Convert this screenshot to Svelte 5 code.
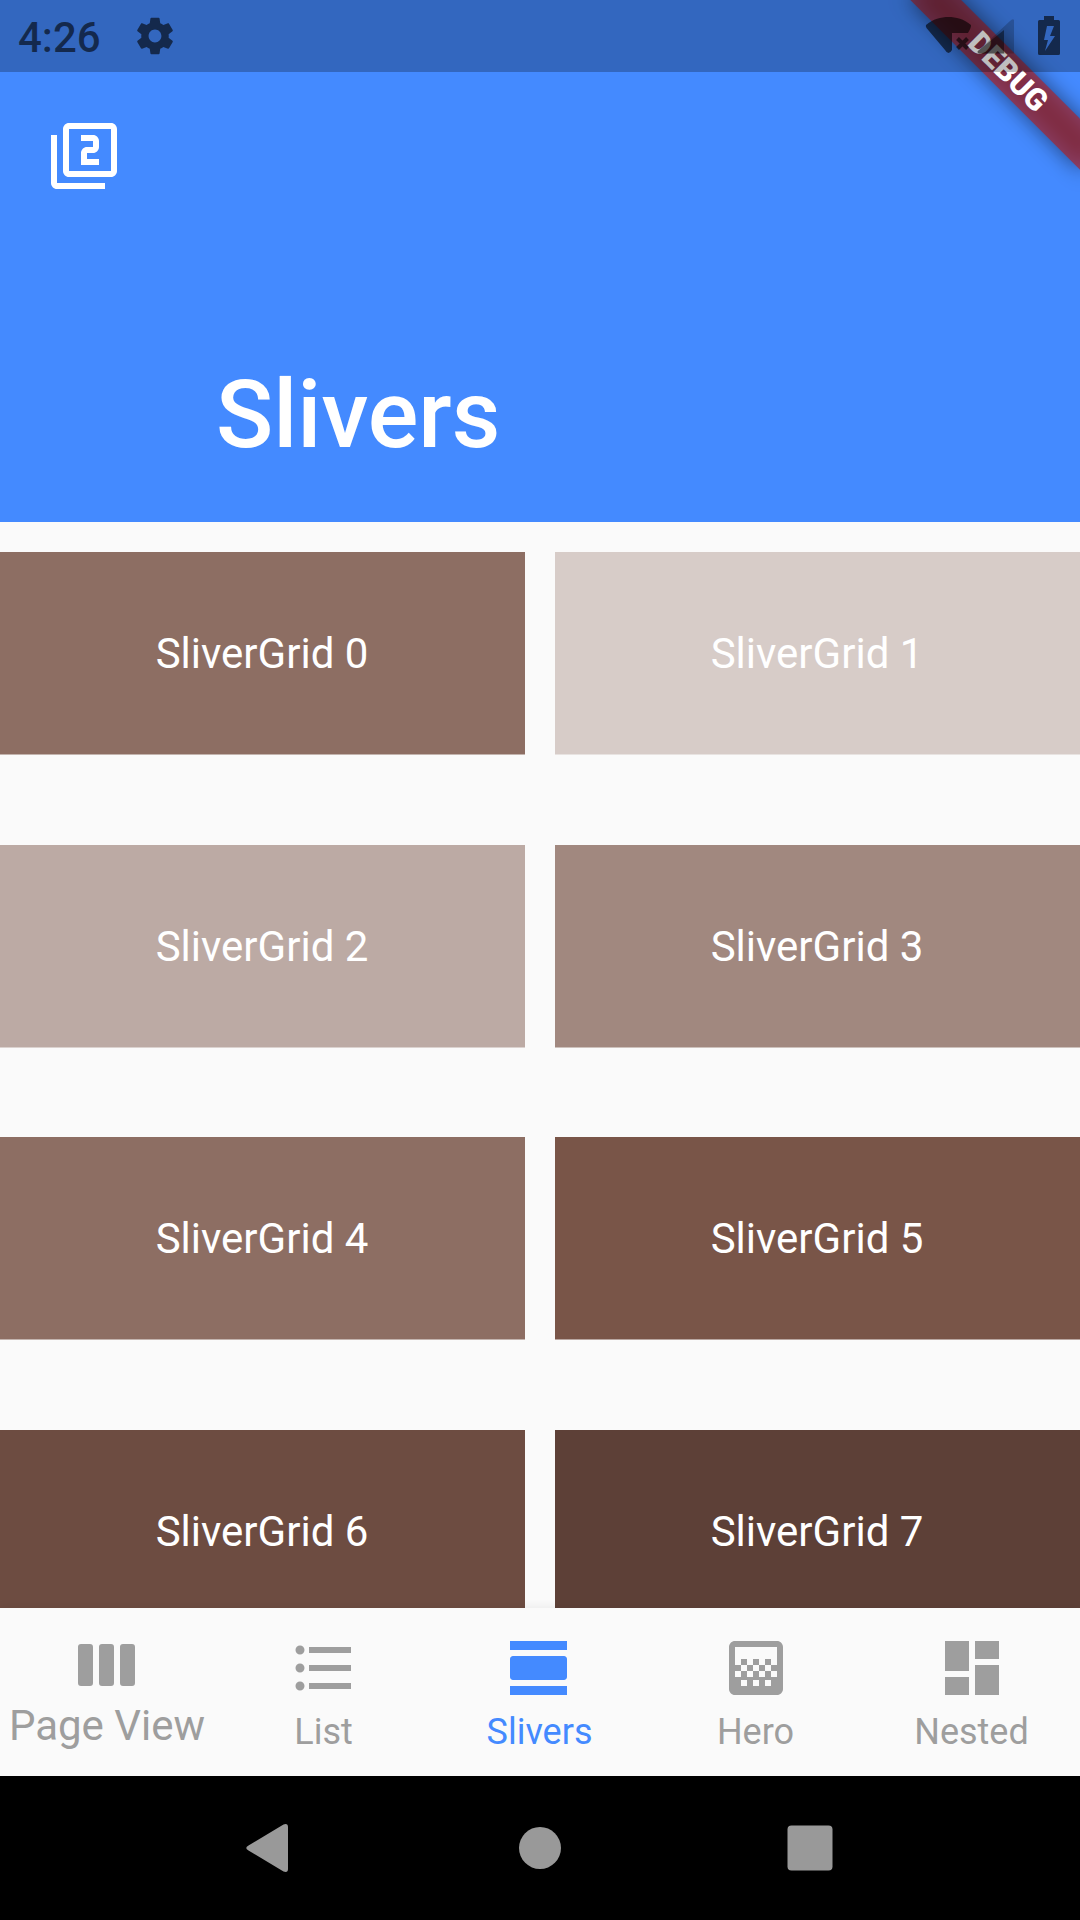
<script>
  const tiles = [
    { label: 'SliverGrid 0', shade: 'b400' },
    { label: 'SliverGrid 1', shade: 'b100' },
    { label: 'SliverGrid 2', shade: 'b200' },
    { label: 'SliverGrid 3', shade: 'b300' },
    { label: 'SliverGrid 4', shade: 'b400' },
    { label: 'SliverGrid 5', shade: 'b500' },
    { label: 'SliverGrid 6', shade: 'b600' },
    { label: 'SliverGrid 7', shade: 'b800' }
  ];

  const tabs = [
    {
      label: 'Page View',
      large: true,
      path: 'M3 4h3a1 1 0 0 1 1 1v12a1 1 0 0 1-1 1H3a1 1 0 0 1-1-1V5a1 1 0 0 1 1-1zM10 4h3a1 1 0 0 1 1 1v12a1 1 0 0 1-1 1h-3a1 1 0 0 1-1-1V5a1 1 0 0 1 1-1zM17 4h3a1 1 0 0 1 1 1v12a1 1 0 0 1-1 1h-3a1 1 0 0 1-1-1V5a1 1 0 0 1 1-1z'
    },
    {
      label: 'List',
      path: 'M4 10.5a1.5 1.5 0 1 0 0 3 1.5 1.5 0 0 0 0-3zm0-6a1.5 1.5 0 1 0 0 3 1.5 1.5 0 0 0 0-3zm0 12a1.5 1.5 0 1 0 0 3 1.5 1.5 0 0 0 0-3zM7 19h14v-2H7v2zm0-6h14v-2H7v2zm0-8v2h14V5H7z'
    },
    {
      label: 'Slivers',
      active: true,
      path: 'M2 21h19v-3H2v3zM20 8H3c-.55 0-1 .45-1 1v6c0 .55.45 1 1 1h17c.55 0 1-.45 1-1V9c0-.55-.45-1-1-1zM2 3v3h19V3H2z'
    },
    {
      label: 'Hero',
      path: 'M11 9h2v2h-2zm-2 2h2v2H9zm4 0h2v2h-2zm2-2h2v2h-2zM7 9h2v2H7zm12-6H5c-1.1 0-2 .9-2 2v14c0 1.1.9 2 2 2h14c1.1 0 2-.9 2-2V5c0-1.1-.9-2-2-2zM9 18H7v-2h2v2zm4 0h-2v-2h2v2zm4 0h-2v-2h2v2zm2-7h-2v2h2v2h-2v-2h-2v2h-2v-2h-2v2H9v-2H7v2H5v-2h2v-2H5V5h14v6z'
    },
    {
      label: 'Nested',
      path: 'M3 13h8V3H3v10zm0 8h8v-6H3v6zm10 0h8V11h-8v10zm0-18v6h8V3h-8z'
    }
  ];
</script>

<div class="screen">
  <div class="banner"><span>DEBUG</span></div>

  <div class="status">
    <span class="clock">4:26</span>
    <svg class="gear" width="44" height="44" viewBox="0 0 24 24">
      <path d="M19.43 12.98c.04-.32.07-.64.07-.98s-.03-.66-.07-.98l2.11-1.65c.19-.15.24-.42.12-.64l-2-3.46c-.12-.22-.39-.3-.61-.22l-2.49 1c-.52-.4-1.08-.73-1.69-.98l-.38-2.65C14.46 2.18 14.25 2 14 2h-4c-.25 0-.46.18-.49.42l-.38 2.65c-.61.25-1.17.59-1.69.98l-2.49-1c-.23-.09-.49 0-.61.22l-2 3.46c-.13.22-.07.49.12.64l2.11 1.65c-.04.32-.07.65-.07.98s.03.66.07.98l-2.11 1.65c-.19.15-.24.42-.12.64l2 3.46c.12.22.39.3.61.22l2.49-1c.52.4 1.08.73 1.69.98l.38 2.65c.03.24.24.42.49.42h4c.25 0 .46-.18.49-.42l.38-2.65c.61-.25 1.17-.59 1.69-.98l2.49 1c.23.09.49 0 .61-.22l2-3.46c.12-.22.07-.49-.12-.64l-2.11-1.65zM12 15.5c-1.93 0-3.5-1.57-3.5-3.5s1.57-3.5 3.5-3.5 3.5 1.57 3.5 3.5-1.57 3.5-3.5 3.5z" />
    </svg>
    <svg class="indicators" width="140" height="72" viewBox="0 0 140 72">
      <path d="M6 25C13 19 21 17 28.500 17S44 19 51 25Q51.500 27 48 33H32V50Q28.500 56 25 50L6.500 28Q5.500 26.500 6 25z" />
      <path d="M37.500 38.500l10 10M47.500 38.500l-10 10" class="cross" />
      <path class="faint" d="M94 20V53.500H59Q56 52 59 50L90 21Q93 18 94 20z" />
      <path class="level" d="M84 30V53.500H59Q56 52 59 50z" />
      <path fill-rule="evenodd" d="M124 16h10v4h4.500q1.500 0 1.500 1.500V53.500q0 1.500-1.500 1.500h-19q-1.500 0-1.500-1.500V21.500q0-1.500 1.500-1.500H124zM127 26l-3 14h4l-3 11 10-15h-5l4-10z" />
    </svg>
  </div>

  <header>
    <svg class="filter" width="72" height="72" viewBox="0 0 24 24">
      <path d="M3 5H1v16c0 1.100.9 2 2 2h16v-2H3V5zm18-4H7c-1.100 0-2 .9-2 2v14c0 1.100.9 2 2 2h14c1.100 0 2-.9 2-2V3c0-1.100-.9-2-2-2zm0 16H7V3h14v14zm-4-4h-4v-2h2c1.100 0 2-.89 2-2V7c0-1.110-.9-2-2-2h-4v2h4v2h-2c-1.100 0-2 .89-2 2v4h6v-2z" />
    </svg>
    <h1>Slivers</h1>
  </header>

  <main>
    {#each tiles as tile}
      <div class="tile {tile.shade}">{tile.label}</div>
    {/each}
  </main>

  <nav class="tabs">
    {#each tabs as tab}
      <div class="tab" class:active={tab.active} class:large={tab.large}>
        <svg width="72" height="72" viewBox="0 0 24 24"><path d={tab.path} /></svg>
        <span>{tab.label}</span>
      </div>
    {/each}
  </nav>

  <div class="system">
    <svg width="60" height="60" viewBox="0 0 60 60"><path d="M8.500 27.500L43.500 6.500Q48 5 48 9V51Q48 55 43.500 53.500L8.500 32.500Q4 30 8.500 27.500z" /></svg>
    <svg width="60" height="60" viewBox="0 0 60 60"><circle cx="30" cy="30" r="21" /></svg>
    <svg width="60" height="60" viewBox="0 0 60 60"><rect x="7.500" y="7.500" width="45" height="45" rx="4" /></svg>
  </div>
</div>

<style>
  :global(body) {
    margin: 0;
  }
  .screen {
    position: relative;
    width: 1080px;
    height: 1920px;
    overflow: hidden;
    display: flex;
    flex-direction: column;
    background: #fafafa;
    font-family: Roboto, sans-serif;
  }
  svg {
    display: block;
    flex: none;
  }
  .status {
    position: relative;
    z-index: 3;
    box-sizing: border-box;
    flex: none;
    height: 72px;
    padding: 0 20px 0 18px;
    display: flex;
    align-items: center;
    background: rgba(0, 0, 0, 0.25);
  }
  .status svg {
    fill: rgba(0, 0, 0, 0.6);
  }
  .clock {
    width: 115px;
    font-size: 42px;
    font-weight: 500;
    line-height: 72px;
    padding-top: 4px;
    color: rgba(0, 0, 0, 0.6);
  }
  .indicators {
    margin-left: auto;
  }
  .status .cross {
    fill: none;
    stroke: rgba(0, 0, 0, 0.6);
    stroke-width: 4;
  }
  .status .faint {
    fill: rgba(0, 0, 0, 0.2);
  }
  .status .level {
    fill: rgba(0, 0, 0, 0.45);
  }
  /* Corner ribbon, laid over the header and beneath the status bar */
  .banner {
    position: absolute;
    z-index: 2;
    left: 960px;
    top: 84px;
    width: 240px;
    height: 36px;
    transform-origin: 120px -84px;
    transform: rotate(45deg);
    text-align: center;
    color: #fff;
    font-size: 30.6px;
    font-weight: 900;
    line-height: 36px;
  }
  .banner::before,
  .banner::after {
    content: '';
    position: absolute;
    inset: 0;
    z-index: -1;
  }
  .banner::before {
    background: rgba(0, 0, 0, 0.5);
    filter: blur(10.9px);
  }
  .banner::after {
    background: rgba(183, 28, 28, 0.627);
  }
  header {
    box-sizing: border-box;
    flex: none;
    height: 522px;
    margin-top: -72px;
    padding: 120px 48px 0;
    background: #448aff;
    color: #fff;
  }
  .filter {
    fill: #fff;
  }
  h1 {
    margin: 170px 0 0 168px;
    font-size: 94.5px;
    font-weight: 500;
    line-height: 106px;
  }
  main {
    box-sizing: border-box;
    flex: none;
    height: 1086px;
    padding-top: 30px;
    overflow: hidden;
    display: grid;
    grid-template-columns: 525px 525px;
    grid-template-rows: 293px 292px 293px 293px;
    column-gap: 30px;
    align-content: start;
  }
  .tile {
    position: relative;
    box-sizing: border-box;
    height: 203px;
    padding-right: 1px;
    display: flex;
    align-items: center;
    justify-content: center;
    font-size: 42px;
    color: #fff;
  }
  /* Soft half-pixel lower edge */
  .tile::after {
    content: '';
    position: absolute;
    left: 0;
    right: 0;
    bottom: 0;
    height: 1px;
    background: rgba(250, 250, 250, 0.5);
  }
  .b100 { background: #d7ccc8; }
  .b200 { background: #bcaaa4; }
  .b300 { background: #a1887f; }
  .b400 { background: #8d6e63; }
  .b500 { background: #795548; }
  .b600 { background: #6d4c41; }
  .b800 { background: #5d4037; }
  .tabs {
    position: relative;
    flex: none;
    height: 168px;
    display: grid;
    grid-template-columns: repeat(5, 216px);
    background: #fafafa;
    box-shadow: 0 -1px 9px rgba(0, 0, 0, 0.07);
  }
  .tab {
    box-sizing: border-box;
    padding-top: 24px;
    display: flex;
    flex-direction: column;
    align-items: center;
    color: #9e9e9e;
    fill: currentColor;
    font-size: 36px;
    line-height: 42px;
    white-space: nowrap;
  }
  .tab span {
    margin: 7px 1px 0 0;
  }
  .tab.large {
    font-size: 42px;
  }
  .tab.large span {
    margin: 1px 2px 0 0;
  }
  .tab.active {
    color: #448aff;
  }
  .system {
    flex: none;
    height: 144px;
    display: flex;
    align-items: center;
    justify-content: center;
    gap: 210px;
    background: #000;
    fill: #999;
  }
</style>
